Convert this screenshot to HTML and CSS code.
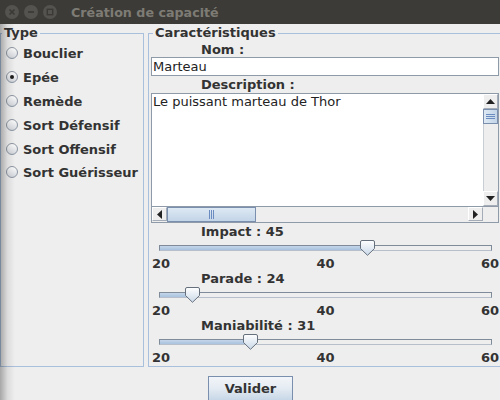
FILE: index.html
```html
<!DOCTYPE html>
<html lang="fr">
<head>
<meta charset="utf-8">
<title>Création de capacité</title>
<link rel="stylesheet" href="styles.css">
</head>
<body>
<div class="window">
  <div class="titlebar">
    <div class="wbtns">
      <span class="wbtn"><svg width="14" height="14" viewBox="0 0 14 14"><path d="M4.5 4.5 L9.5 9.5 M9.5 4.5 L4.5 9.5" stroke="#3a3935" stroke-width="1.6" fill="none"/></svg></span>
      <span class="wbtn"><svg width="14" height="14" viewBox="0 0 14 14"><path d="M4 7 H10" stroke="#3a3935" stroke-width="1.6" fill="none"/></svg></span>
      <span class="wbtn"><svg width="14" height="14" viewBox="0 0 14 14"><rect x="4.3" y="4.3" width="5.4" height="5.4" stroke="#3a3935" stroke-width="1.4" fill="none"/></svg></span>
    </div>
    <div class="title">Création de capacité</div>
  </div>

  <div class="main">
    <fieldset class="group type">
      <legend>Type</legend>
      <div class="radio"><span class="rb"></span>Bouclier</div>
      <div class="radio"><span class="rb on"></span>Epée</div>
      <div class="radio"><span class="rb"></span>Remède</div>
      <div class="radio"><span class="rb"></span>Sort Défensif</div>
      <div class="radio"><span class="rb"></span>Sort Offensif</div>
      <div class="radio"><span class="rb"></span>Sort Guérisseur</div>
    </fieldset>

    <fieldset class="group carac">
      <legend>Caractéristiques</legend>
      <div class="lbl nom">Nom :</div>
      <div class="field">Marteau</div>
      <div class="lbl desc">Description :</div>
      <div class="area">
        <div class="area-top">
          <div class="area-text">Le puissant marteau de Thor</div>
          <div class="vscroll">
            <div class="sbtn"><svg width="9" height="5" viewBox="0 0 9 5"><path d="M0 5 L4.5 0 L9 5 Z" fill="#222"/></svg></div>
            <div class="vthumb"><svg width="9" height="5" viewBox="0 0 9 5"><path d="M0 0.5 H9 M0 2.5 H9 M0 4.5 H9" stroke="#6b8cc0" stroke-width="1"/></svg></div>
            <div class="vtrack"></div>
            <div class="sbtn"><svg width="9" height="5" viewBox="0 0 9 5"><path d="M0 0 L4.5 5 L9 0 Z" fill="#222"/></svg></div>
          </div>
        </div>
        <div class="hscroll">
          <div class="sbtn"><svg width="5" height="9" viewBox="0 0 5 9"><path d="M5 0 L0 4.5 L5 9 Z" fill="#222"/></svg></div>
          <div class="htrack">
            <div class="hthumb"><svg width="5" height="9" viewBox="0 0 5 9"><path d="M0.5 0 V9 M2.5 0 V9 M4.5 0 V9" stroke="#6b8cc0" stroke-width="1"/></svg></div>
          </div>
          <div class="sbtn"><svg width="5" height="9" viewBox="0 0 5 9"><path d="M0 0 L5 4.5 L0 9 Z" fill="#222"/></svg></div>
          <div class="corner"></div>
        </div>
      </div>

      <div class="sl-block">
        <div class="lbl">Impact : 45</div>
        <div class="slider">
          <div class="track"><div class="fill" style="width:62.5%"></div></div>
          <svg class="thumb" style="left:calc(62.5% - 7.5px)" width="15" height="16" viewBox="0 0 15 16"><defs><linearGradient id="tg1" x1="0" y1="0" x2="0" y2="1"><stop offset="0" stop-color="#ffffff"/><stop offset="1" stop-color="#c9d8e8"/></linearGradient></defs><path d="M0.5 2 Q0.5 0.5 2 0.5 H13 Q14.5 0.5 14.5 2 V8.5 L7.5 15.3 L0.5 8.5 Z" fill="url(#tg1)" stroke="#66707c"/></svg>
        </div>
        <div class="ticks"><span>20</span><span>40</span><span>60</span></div>
      </div>

      <div class="sl-block">
        <div class="lbl">Parade : 24</div>
        <div class="slider">
          <div class="track"><div class="fill" style="width:10%"></div></div>
          <svg class="thumb" style="left:calc(10% - 7.5px)" width="15" height="16" viewBox="0 0 15 16"><defs><linearGradient id="tg2" x1="0" y1="0" x2="0" y2="1"><stop offset="0" stop-color="#ffffff"/><stop offset="1" stop-color="#c9d8e8"/></linearGradient></defs><path d="M0.5 2 Q0.5 0.5 2 0.5 H13 Q14.5 0.5 14.5 2 V8.5 L7.5 15.3 L0.5 8.5 Z" fill="url(#tg2)" stroke="#66707c"/></svg>
        </div>
        <div class="ticks"><span>20</span><span>40</span><span>60</span></div>
      </div>

      <div class="sl-block">
        <div class="lbl">Maniabilité : 31</div>
        <div class="slider">
          <div class="track"><div class="fill" style="width:27.5%"></div></div>
          <svg class="thumb" style="left:calc(27.5% - 7.5px)" width="15" height="16" viewBox="0 0 15 16"><defs><linearGradient id="tg3" x1="0" y1="0" x2="0" y2="1"><stop offset="0" stop-color="#ffffff"/><stop offset="1" stop-color="#c9d8e8"/></linearGradient></defs><path d="M0.5 2 Q0.5 0.5 2 0.5 H13 Q14.5 0.5 14.5 2 V8.5 L7.5 15.3 L0.5 8.5 Z" fill="url(#tg3)" stroke="#66707c"/></svg>
        </div>
        <div class="ticks"><span>20</span><span>40</span><span>60</span></div>
      </div>
    </fieldset>
  </div>

  <div class="actions"><button class="btn">Valider</button></div>
  <div class="shadow"></div>
</div>
</body>
</html>
```

FILE: styles.css
```css
html, body {
  margin: 0;
  padding: 0;
}
body {
  background: #eeeeee;
  font-family: "DejaVu Sans", "Liberation Sans", sans-serif;
  font-size: 13px;
  color: #333333;
}
.window {
  position: relative;
  width: 500px;
  height: 400px;
  overflow: hidden;
  background: #eeeeee;
}

/* title bar */
.titlebar {
  height: 24px;
  background: #3c3b37;
  display: flex;
  align-items: center;
}
.wbtns {
  display: flex;
  gap: 5px;
  padding-left: 5px;
}
.wbtn {
  width: 14px;
  height: 14px;
  border-radius: 50%;
  background: #55534f;
  display: block;
}
.wbtn svg {
  display: block;
}
.title {
  margin-left: 14px;
  color: #7e7b75;
  font-weight: bold;
  font-size: 12.7px;
}

/* groups */
.main {
  display: flex;
  gap: 4px;
  width: 510px;
  margin-top: 1px;
}
.group {
  margin: 0;
  padding: 0;
  border: 1px solid #a9c0dc;
  box-sizing: border-box;
  height: 342px;
  min-width: 0;
}
.group legend {
  font-weight: bold;
  line-height: 16px;
  padding: 0 2px;
}
.type {
  width: 144px;
}
.type legend {
  margin-left: 1px;
}
.carac {
  width: 354px;
  padding: 0 2px;
}
.carac legend {
  margin-left: 2px;
}

/* radios */
.radio {
  display: flex;
  align-items: center;
  height: 24px;
  padding-left: 5px;
  gap: 5px;
  font-weight: bold;
}
.radio:last-child {
  height: 22px;
}
.rb {
  width: 12px;
  height: 12px;
  box-sizing: border-box;
  border-radius: 50%;
  border: 1px solid #8d96a2;
  background: linear-gradient(#fbfbfb, #d3d7dd);
  display: flex;
  align-items: center;
  justify-content: center;
}
.rb.on::after {
  content: "";
  width: 4px;
  height: 4px;
  border-radius: 50%;
  background: #1e1e1e;
}

/* labels and fields */
.lbl {
  padding-left: 50px;
  font-weight: bold;
  height: 16px;
  line-height: 16px;
}
.lbl.nom {
  line-height: 18px;
}
.lbl.desc {
  height: 17px;
  line-height: 17px;
}
.field {
  height: 19px;
  box-sizing: border-box;
  border: 1px solid #8f9aa8;
  background: #ffffff;
  line-height: 17px;
  padding-left: 1px;
  color: #222;
}
.area {
  height: 130px;
  box-sizing: border-box;
  border: 1px solid #8f9aa8;
  background: #ffffff;
  display: flex;
  flex-direction: column;
}
.area-top {
  flex: 1;
  display: flex;
  min-height: 0;
}
.area-text {
  flex: 1;
  padding: 0 1px;
  line-height: 15px;
  color: #222;
}

/* scrollbars */
.vscroll {
  width: 15px;
  background: #eeeeee;
  display: flex;
  flex-direction: column;
}
.sbtn {
  width: 15px;
  height: 15px;
  box-sizing: border-box;
  border: 1px solid #a3acb7;
  border-top-color: #ffffff;
  border-left-color: #ffffff;
  background: #eeeeee;
  display: flex;
  align-items: center;
  justify-content: center;
  flex: none;
}
.vthumb {
  height: 15px;
  box-sizing: border-box;
  border: 1px solid #7a8fae;
  background: linear-gradient(to right, #dde8f3, #c3d5e8);
  display: flex;
  align-items: center;
  justify-content: center;
  flex: none;
}
.vtrack {
  flex: 1;
  border-left: 1px solid #c9ced4;
}
.hscroll {
  height: 15px;
  display: flex;
  background: #eeeeee;
  border-top: 1px solid #8f9aa8;
}
.hscroll .sbtn {
  height: 14px;
}
.htrack {
  flex: 1;
  display: flex;
}
.hthumb {
  width: 89px;
  box-sizing: border-box;
  border: 1px solid #7a8fae;
  background: linear-gradient(#dde8f3, #c3d5e8);
  display: flex;
  align-items: center;
  justify-content: center;
}
.corner {
  width: 15px;
  background: #eeeeee;
}

/* sliders */
.sl-block .lbl {
  height: 16px;
  line-height: 16px;
}
.area + .sl-block {
  margin-top: 1px;
}
.slider {
  position: relative;
  height: 16px;
  margin: 0 7px 0 8px;
}
.track {
  position: relative;
  top: 5px;
  height: 6px;
  box-sizing: border-box;
  border: 1px solid #7f8b98;
  border-bottom-color: #b7c0ca;
  background: #eeeeee;
}
.fill {
  height: 100%;
  background: linear-gradient(#c4d6ea, #a9c2de);
}
.thumb {
  position: absolute;
  top: 0;
}
.ticks {
  display: flex;
  justify-content: space-between;
  height: 15px;
  line-height: 15px;
  padding-left: 1px;
  font-weight: bold;
}

/* button */
.actions {
  padding-left: 208px;
  margin-top: 9px;
}
.btn {
  width: 85px;
  height: 26px;
  box-sizing: border-box;
  border: 1px solid #7a8fae;
  background: linear-gradient(#f2f5f9, #e5ecf3 45%, #c5d5e6);
  font-family: "DejaVu Sans", "Liberation Sans", sans-serif;
  font-weight: bold;
  font-size: 13px;
  color: #333333;
  line-height: 22px;
  padding: 0;
  margin: 0;
}

/* desktop shadow on the left edge */
.shadow {
  position: absolute;
  left: 0;
  top: 24px;
  bottom: 0;
  width: 15px;
  background: linear-gradient(to right, rgba(0, 0, 0, 0.3), rgba(0, 0, 0, 0.08) 50%, rgba(0, 0, 0, 0));
  pointer-events: none;
}
```
